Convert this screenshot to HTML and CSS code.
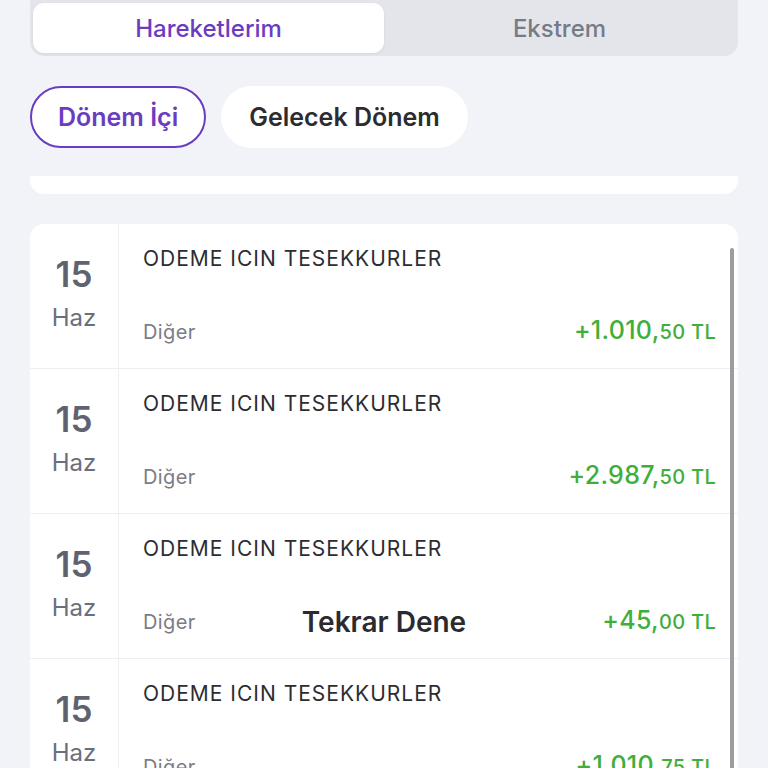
FILE: index.html
```html
<!DOCTYPE html>
<html lang="tr">
<head>
    <meta charset="UTF-8">
    <meta name="viewport" content="width=device-width, initial-scale=1.0">
    <title>Hareketlerim</title>
    <link rel="stylesheet" href="styles.css">
</head>
<body>
    <div class="page">
        <div class="segment">
            <div class="segment-tab active">Hareketlerim</div>
            <div class="segment-tab">Ekstrem</div>
        </div>

        <div class="chips">
            <div class="chip selected">Dönem İçi</div>
            <div class="chip">Gelecek Dönem</div>
        </div>

        <div class="summary-tail"></div>

        <div class="list">
            <div class="scrollbar"></div>

            <div class="row">
                <div class="date">
                    <span class="day">15</span>
                    <span class="month">Haz</span>
                </div>
                <div class="info">
                    <div class="title">ODEME ICIN TESEKKURLER</div>
                    <div class="bottom">
                        <span class="category">Diğer</span>
                        <span class="amount">+1.010,<small>50 TL</small></span>
                    </div>
                </div>
            </div>

            <div class="row">
                <div class="date">
                    <span class="day">15</span>
                    <span class="month">Haz</span>
                </div>
                <div class="info">
                    <div class="title">ODEME ICIN TESEKKURLER</div>
                    <div class="bottom">
                        <span class="category">Diğer</span>
                        <span class="amount">+2.987,<small>50 TL</small></span>
                    </div>
                </div>
            </div>

            <div class="row">
                <div class="date">
                    <span class="day">15</span>
                    <span class="month">Haz</span>
                </div>
                <div class="info">
                    <div class="title">ODEME ICIN TESEKKURLER</div>
                    <div class="bottom">
                        <span class="category">Diğer</span>
                        <span class="amount">+45,<small>00 TL</small></span>
                    </div>
                </div>
            </div>

            <div class="row">
                <div class="date">
                    <span class="day">15</span>
                    <span class="month">Haz</span>
                </div>
                <div class="info">
                    <div class="title">ODEME ICIN TESEKKURLER</div>
                    <div class="bottom">
                        <span class="category">Diğer</span>
                        <span class="amount">+1.010,<small>75 TL</small></span>
                    </div>
                </div>
            </div>
        </div>
    </div>

    <div class="retry">Tekrar Dene</div>
</body>
</html>
```

FILE: styles.css
```css
* {
    margin: 0;
    padding: 0;
    box-sizing: border-box;
}

body {
    background: #f2f3f8;
    font-family: Inter, "Noto Sans", sans-serif;
    height: 768px;
    overflow: hidden;
    position: relative;
}

.page {
    padding: 0 30px;
}

/* top segmented control */
.segment {
    display: flex;
    height: 56px;
    padding: 3px;
    background: #e4e5ea;
    border-radius: 0 0 14px 14px;
}

.segment-tab {
    flex: 1;
    display: flex;
    align-items: center;
    justify-content: center;
    font-size: 24px;
    font-weight: 500;
    color: #777b86;
    border-radius: 11px;
}

.segment-tab.active {
    background: #fff;
    color: #6a3cc2;
    box-shadow: 0 1px 3px rgba(0, 0, 0, 0.06);
}

/* period chips */
.chips {
    display: flex;
    gap: 15px;
    margin-top: 30px;
}

.chip {
    height: 62px;
    padding: 0 26px;
    display: flex;
    align-items: center;
    background: #fff;
    border-radius: 31px;
    font-size: 25px;
    font-weight: 600;
    color: #2c2c30;
    border: 2px solid transparent;
}

.chip.selected {
    border-color: #6a3cc2;
    color: #6a3cc2;
}

.summary-tail {
    height: 18px;
    margin-top: 28px;
    background: #fff;
    border-radius: 0 0 14px 14px;
}

/* transaction list */
.list {
    position: relative;
    margin-top: 30px;
    background: #fff;
    border-radius: 14px;
}

.scrollbar {
    position: absolute;
    top: 24px;
    right: 4px;
    width: 4px;
    height: 540px;
    background: #9c9ca0;
    border-radius: 2px;
}

.row {
    display: flex;
    height: 145px;
    border-bottom: 1px solid #eeeff2;
}

.date {
    width: 89px;
    flex-shrink: 0;
    display: flex;
    flex-direction: column;
    align-items: center;
    padding-top: 30px;
    border-right: 1px solid #eef0f3;
}

.day {
    font-size: 35px;
    line-height: 40px;
    font-weight: 600;
    color: #5f6370;
}

.month {
    margin-top: 9px;
    font-size: 24px;
    line-height: 30px;
    color: #6b6f7b;
}

.info {
    flex: 1;
    padding: 22px 22px 0 24px;
}

.title {
    font-size: 21px;
    line-height: 26px;
    letter-spacing: 1px;
    color: #2d2d31;
}

.bottom {
    display: flex;
    justify-content: space-between;
    align-items: baseline;
    margin-top: 44px;
    line-height: 28px;
}

.category {
    font-size: 20px;
    letter-spacing: 0.4px;
    color: #7a7d86;
}

.amount {
    font-size: 25px;
    font-weight: 500;
    letter-spacing: 0.3px;
    color: #3fae3a;
}

.amount small {
    font-size: 20px;
}

.retry {
    position: absolute;
    left: 0;
    right: 0;
    top: 605px;
    text-align: center;
    font-size: 28px;
    line-height: 34px;
    font-weight: 600;
    color: #2b2b2f;
}
```
